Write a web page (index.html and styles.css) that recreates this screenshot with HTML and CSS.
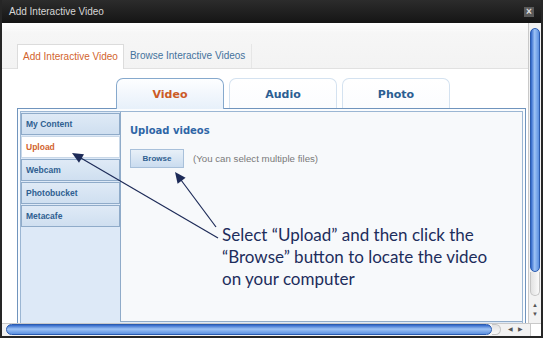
FILE: index.html
```html
<!DOCTYPE html>
<html lang="en">
<head>
    <meta charset="UTF-8">
    <meta name="viewport" content="width=device-width, initial-scale=1.0">
    <title>Add Interactive Video</title>
    <link rel="stylesheet" href="styles.css">
</head>
<body>
    <div class="window">
        <div class="titlebar">
            <span class="title">Add Interactive Video</span>
            <span class="close">&times;</span>
        </div>
        <div class="main">
            <div class="viewport">
                <div class="pagetabs">
                    <div class="pagetab active">Add Interactive Video</div>
                    <div class="pagetab">Browse Interactive Videos</div>
                </div>
                <div class="section">
                    <div class="mediatabs">
                        <div class="mediatab active">Video</div>
                        <div class="mediatab">Audio</div>
                        <div class="mediatab">Photo</div>
                    </div>
                    <div class="panel">
                        <div class="panel-inner">
                            <ul class="sources">
                                <li>My Content</li>
                                <li class="current">Upload</li>
                                <li>Webcam</li>
                                <li>Photobucket</li>
                                <li>Metacafe</li>
                            </ul>
                            <div class="content">
                                <h2>Upload videos</h2>
                                <div class="upload-row">
                                    <button class="browse">Browse</button>
                                    <span class="hint">(You can select multiple files)</span>
                                </div>
                            </div>
                        </div>
                    </div>
                </div>
            </div>
            <div class="vscroll">
                <div class="vthumb"></div>
                <div class="vcap"></div>
                <div class="varrows"><span>&#9650;</span><span>&#9660;</span></div>
            </div>
        </div>
        <div class="hbar">
            <div class="hthumb"></div>
            <div class="hcap"></div>
            <div class="harrows"><span>&#9664;</span><span>&#9654;</span></div>
            <div class="corner"></div>
        </div>

        <p class="callout">Select &ldquo;Upload&rdquo; and then click the<br>&ldquo;Browse&rdquo; button to locate the video<br>on your computer</p>

        <svg class="arrows" width="543" height="338" viewBox="0 0 543 338">
            <line x1="218" y1="238" x2="80" y2="157.5" />
            <polygon points="72,153 84,154.2 79,162.8" />
            <line x1="216" y1="227" x2="181" y2="180" />
            <polygon points="175,172 185.6,177.8 177.6,183.8" />
        </svg>
    </div>
</body>
</html>
```

FILE: styles.css
```css
*{
    box-sizing: border-box;
}
body{
    margin: 0;
    background: #1e1e1e;
    font-family: "Liberation Sans", Arial, sans-serif;
}
.window{
    position: relative;
    width: 543px;
    height: 338px;
    background: #232323;
    border: 2px solid #262626;
    border-top: 0;
    overflow: hidden;
}
.titlebar{
    height: 23px;
    display: flex;
    align-items: center;
    justify-content: space-between;
    padding: 0 7px 0 7px;
    background: linear-gradient(#2c2c2c, #151515);
    color: #d6d6d6;
    font-size: 10px;
}
.close{
    width: 10px;
    height: 10px;
    background: #5a5a5a;
    color: #e0e0e0;
    font-size: 10px;
    line-height: 10px;
    text-align: center;
    font-weight: bold;
}
.main{
    display: flex;
    height: 300px;
}
.viewport{
    width: 526px;
    background: #fff;
    overflow: hidden;
}
.pagetabs{
    height: 46px;
    display: flex;
    align-items: flex-end;
    padding-left: 15px;
    background: linear-gradient(#fff 0, #f6f6f6 10px, #f3f3f3);
    border-bottom: 1px solid #e1e1e1;
}
.pagetab{
    height: 24px;
    line-height: 23px;
    padding: 0 6px;
    font-size: 10px;
    color: #44729c;
    border-right: 1px solid #e6e6e6;
}
.pagetab.active{
    background: #fff;
    color: #d2642e;
    border: 1px solid #dcdcdc;
    border-bottom: 0;
    height: 25px;
    margin-bottom: -1px;
    padding: 0 5px;
}
.section{
    padding: 9px 0 0 15px;
}
.mediatabs{
    display: flex;
    gap: 5px;
    margin-left: 99px;
    height: 30px;
}
.mediatab{
    width: 108px;
    border: 1px solid #d4e2f0;
    border-bottom: 0;
    border-radius: 7px 7px 0 0;
    background: linear-gradient(#fff, #fbfcfe);
    font-family: "DejaVu Sans", Verdana, sans-serif;
    font-weight: bold;
    font-size: 11px;
    color: #2c5e92;
    text-align: center;
    line-height: 31px;
}
.mediatab.active{
    border-color: #86a9cd;
    background: linear-gradient(#fdfeff, #e7f0fa);
    color: #cc5a26;
    height: 31px;
    position: relative;
    z-index: 1;
}
.panel{
    width: 509px;
    border: 1px solid #7094bd;
    padding: 2px;
    background: #fafcfe;
}
.panel-inner{
    display: flex;
    align-items: flex-start;
    border: 1px solid #9bb6d3;
    height: 230px;
    background: #dde9f7;
}
.sources{
    list-style: none;
    margin: 0;
    padding: 1px 0 0 0;
    width: 99px;
}
.sources li{
    height: 22px;
    margin-bottom: 1px;
    padding-left: 4px;
    line-height: 20px;
    border: 1px solid #8fabc9;
    background: linear-gradient(#dfeaf6, #cfdff0);
    font-size: 8.5px;
    font-weight: bold;
    color: #2f5f91;
}
.sources li.current{
    background: #fff;
    border-color: #c9d8e8;
    color: #d2642e;
}
.content{
    flex: 1;
    height: 210px;
    background: #f7f9fb;
    border-left: 1px solid #8fabc9;
    border-bottom: 1px solid #8fabc9;
    padding: 13px 9px;
}
.content h2{
    margin: 0 0 12px 0;
    font-family: "DejaVu Sans", Verdana, sans-serif;
    font-size: 10px;
    line-height: 12px;
    color: #2f66a6;
}
.upload-row{
    display: flex;
    align-items: center;
}
.browse{
    width: 54px;
    height: 19px;
    padding: 0;
    border: 1px solid #a8c0da;
    background: linear-gradient(#e8f0f8, #cadcef);
    font-family: "Liberation Sans", Arial, sans-serif;
    font-weight: bold;
    font-size: 8px;
    color: #2f5f91;
}
.hint{
    margin-left: 9px;
    font-size: 9.7px;
    color: #7a7a7a;
}
.vscroll{
    width: 13px;
    background: #f2f2f2;
    border-left: 1px solid #c9c9c9;
    display: flex;
    flex-direction: column;
}
.vthumb{
    margin: 5px 0 0 1px;
    width: 10px;
    height: 244px;
    border-radius: 5px;
    border: 1px solid #2b5cb0;
    background: linear-gradient(to right, #2f66c9, #9cc2f5 45%, #5c90e0);
}
.vcap{
    margin: 0 0 0 1px;
    width: 10px;
    height: 24px;
    border-radius: 0 0 5px 5px;
    border: 1px solid #c4c4c4;
    border-top: 0;
    background: linear-gradient(to right, #e2e2e2, #fafafa);
}
.varrows{
    display: flex;
    flex-direction: column;
    align-items: center;
    margin-top: 5px;
    font-size: 6px;
    line-height: 9px;
    color: #555;
}
.hbar{
    display: flex;
    height: 13px;
    background: #f2f2f2;
    border-top: 1px solid #c9c9c9;
}
.hthumb{
    margin: 0 0 0 4px;
    width: 486px;
    height: 11px;
    border-radius: 6px;
    border: 1px solid #2b5cb0;
    background: linear-gradient(#2f66c9, #9cc2f5 45%, #5c90e0);
}
.hcap{
    width: 9px;
    height: 11px;
    border-radius: 0 6px 6px 0;
    border: 1px solid #c4c4c4;
    border-left: 0;
    background: linear-gradient(#e2e2e2, #fafafa);
}
.harrows{
    display: flex;
    gap: 5px;
    padding-left: 7px;
    width: 29px;
    font-size: 6px;
    line-height: 11px;
    color: #555;
}
.corner{
    flex: 1;
    background: #fff;
    border-left: 1px solid #c9c9c9;
}
.callout{
    position: absolute;
    left: 220px;
    top: 224px;
    margin: 0;
    font-family: Lato, "Open Sans", sans-serif;
    font-size: 17px;
    line-height: 22px;
    color: #1d2d5c;
}
.arrows{
    position: absolute;
    left: -2px;
    top: 0;
    pointer-events: none;
}
.arrows line{
    stroke: #1d2b58;
    stroke-width: 1.2;
}
.arrows polygon{
    fill: #1d2b58;
}
```
